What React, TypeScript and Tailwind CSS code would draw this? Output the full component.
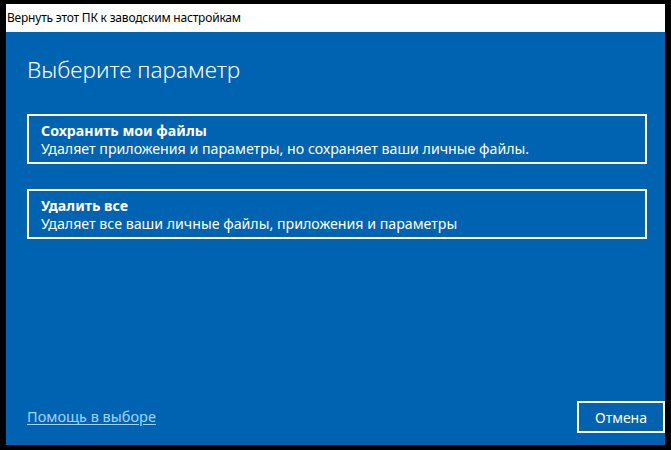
import React from 'react';

const font = { fontFamily: '"Noto Sans", "Open Sans", sans-serif' };

export default function App() {
  return (
    <div className="w-[671px] h-[450px] bg-black pt-[4px] pl-[6px] overflow-hidden" style={font}>
      <div className="w-[659px] h-[441px] flex flex-col">
        {/* Title bar */}
        <div className="h-[28px] bg-white flex items-center pl-[1px] text-[12px] text-black tracking-[-0.2px]">
          Вернуть этот ПК к заводским настройкам
        </div>

        <div className="flex-1 bg-[#0063b1] flex flex-col text-white">
          <h1 className="pl-[21px] pt-[22px] text-[22.6px] font-light leading-[32px]">Выберите параметр</h1>

          <div className="pl-[21px] pr-[18px] mt-[28px] flex flex-col gap-[25px]">
            <button className="h-[50px] border-2 border-white pl-[12px] pt-[2px] text-left flex flex-col justify-center">
              <span className="text-[14.2px] font-bold leading-[18px]">Сохранить мои файлы</span>
              <span className="text-[14.2px] leading-[18px]">Удаляет приложения и параметры, но сохраняет ваши личные файлы.</span>
            </button>
            <button className="h-[50px] border-2 border-white pl-[12px] pt-[2px] text-left flex flex-col justify-center">
              <span className="text-[14.2px] font-bold leading-[18px]">Удалить все</span>
              <span className="text-[14.2px] leading-[18px]">Удаляет все ваши личные файлы, приложения и параметры</span>
            </button>
          </div>

          <div className="mt-auto pb-[12px] pl-[21px] flex items-center justify-between">
            <a className="text-[14.5px] text-[#a3d3ff] underline underline-offset-2">Помощь в выборе</a>
            <button className="w-[88px] h-[32px] border-2 border-white text-[14px]">Отмена</button>
          </div>
        </div>
      </div>
    </div>
  );
}
